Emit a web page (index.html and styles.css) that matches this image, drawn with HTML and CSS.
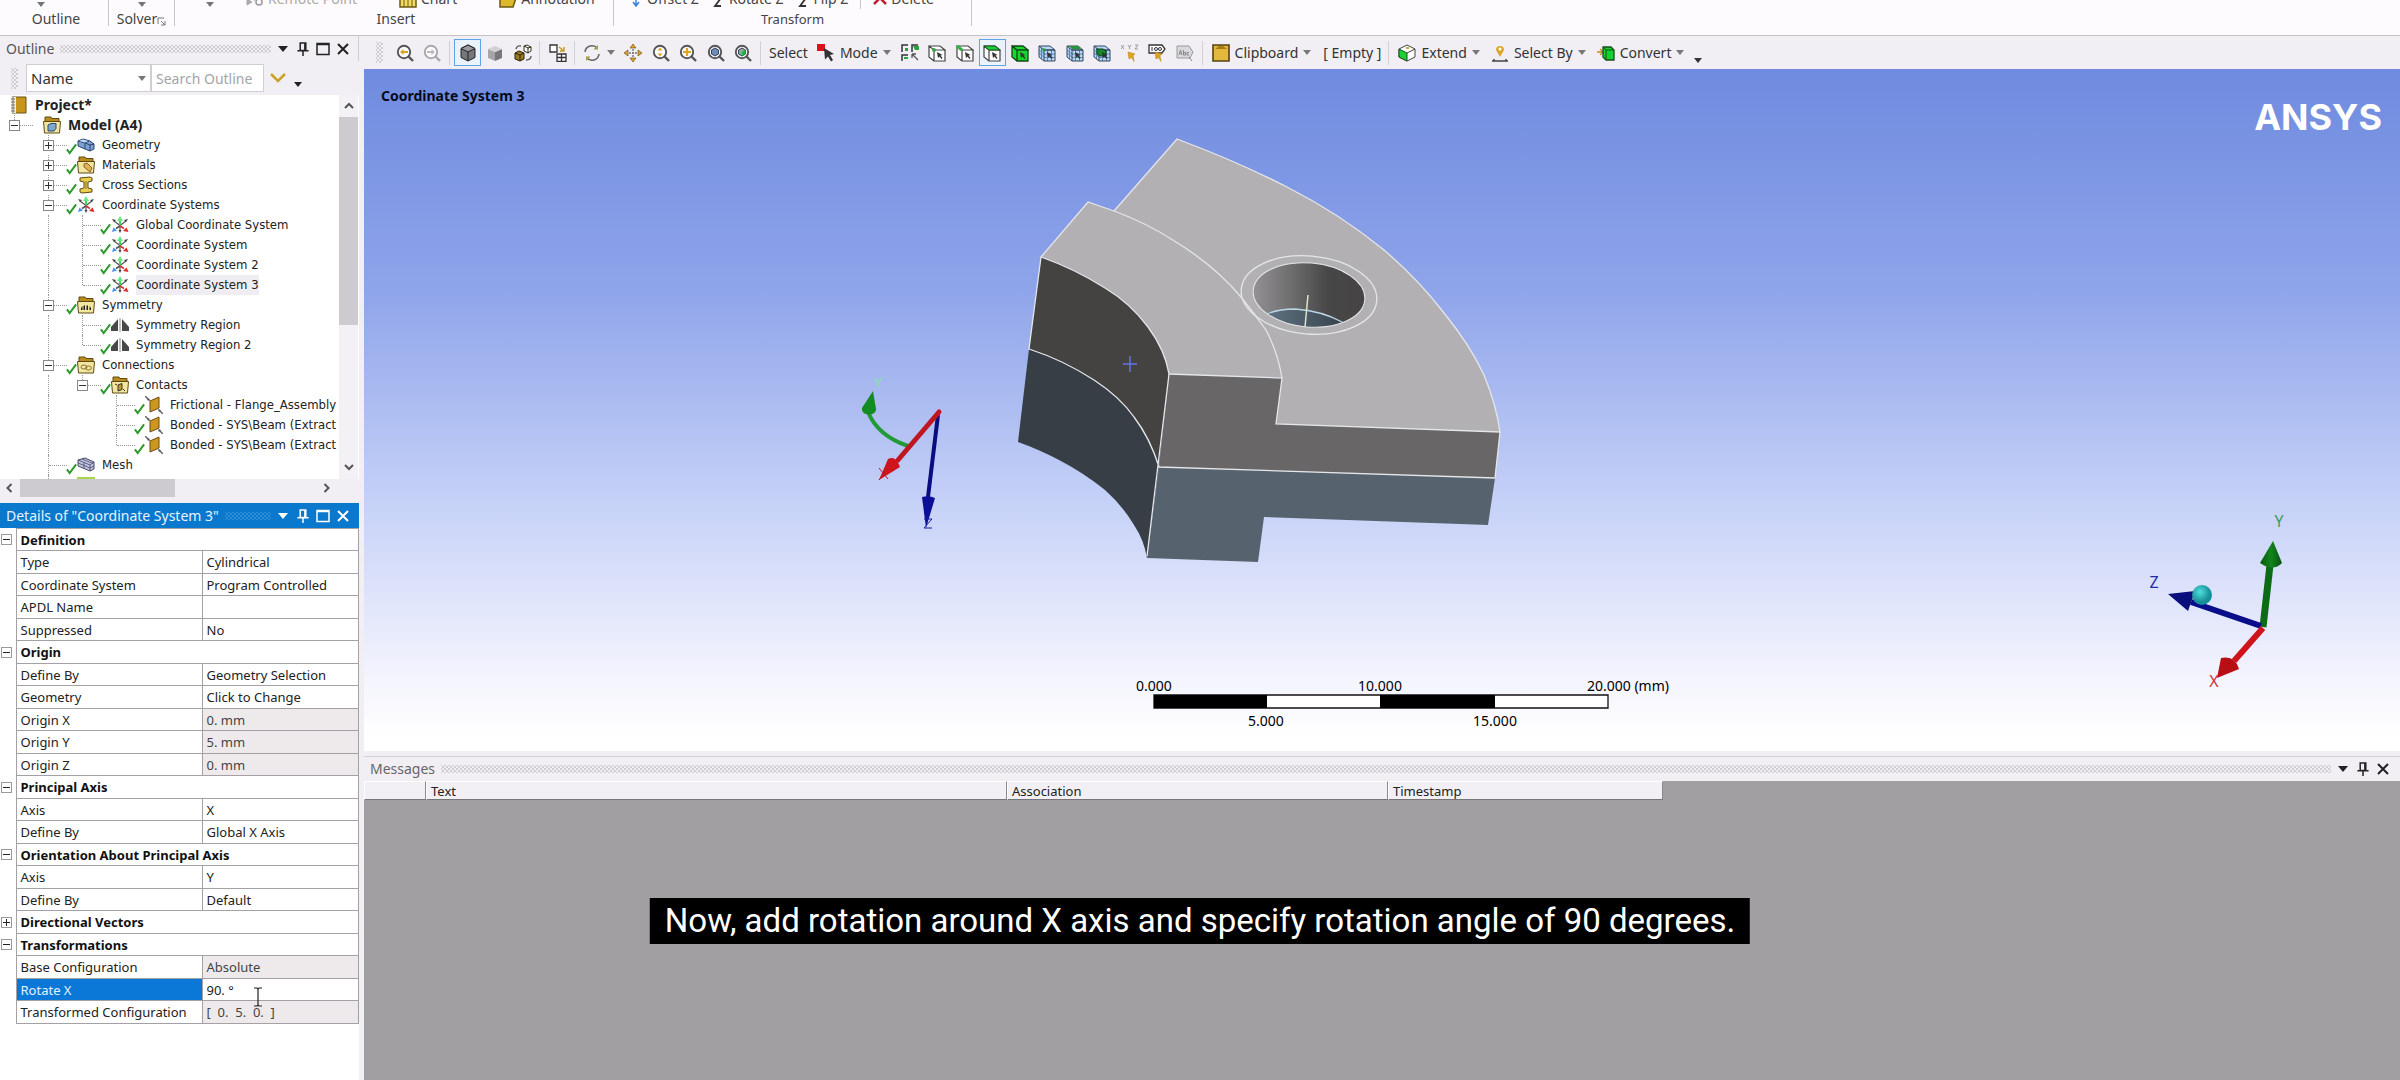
FILE: index.html
```html
<!DOCTYPE html>
<html lang="en">
<head>
<meta charset="utf-8">
<title>Mechanical - Coordinate System 3</title>
<link rel="stylesheet" href="styles.css">
</head>
<body>
<svg class="defs" aria-hidden="true">
  <symbol id="caret" viewBox="0 0 10 6"><path d="M0 0h10L5 6z" fill="currentColor"/></symbol>
  <symbol id="pin" viewBox="0 0 12 15"><path d="M3 1h6v8H3zM0 9.500h12M6 9v6M8 1v8" fill="none" stroke="currentColor" stroke-width="1.600"/></symbol>
  <symbol id="max" viewBox="0 0 14 14"><path d="M1 1.500h12v11H1zM1 2.500h12" fill="none" stroke="currentColor" stroke-width="1.500"/></symbol>
  <symbol id="close" viewBox="0 0 12 12"><path d="M1 1l10 10M11 1L1 11" fill="none" stroke="currentColor" stroke-width="2"/></symbol>
  <symbol id="check" viewBox="0 0 12 12"><path d="M1 6.500l3 4L11 1" fill="none" stroke="#2c9a2c" stroke-width="2.200"/></symbol>
  <symbol id="book" viewBox="0 0 18 18"><path d="M2 1h14v16H2z" fill="#c8951b" stroke="#6b5216"/><path d="M1 1h5v16H1z" fill="#f3edda"/><path d="M3 1v16M1 3h4M1 6h4M1 9h4M1 12h4M1 15h4" stroke="#777" fill="none"/></symbol>
  <symbol id="folder" viewBox="0 0 18 18"><path d="M2 3V1h6l1 1.500h7V6H2z" fill="#b98a1c" stroke="#5e4a14"/><path d="M.5 5.500h17l-1 11.500h-15z" fill="#f3e6a1" stroke="#5e4a14"/></symbol>
  <symbol id="f-model" viewBox="0 0 18 18"><use href="#folder"/><path d="M5 9l3-1.500h5v5L11 15H5z" fill="#7ea6cf" stroke="#274d78"/></symbol>
  <symbol id="f-mat" viewBox="0 0 18 18"><use href="#folder"/><path d="M7 8l3-1 5 5-2 4-6-5z" fill="#e3b155" stroke="#8a681f"/></symbol>
  <symbol id="f-sym" viewBox="0 0 18 18"><use href="#folder"/><path d="M4 14v-2l1.500-2v4zM6.500 14V9.500H8V14zM9.500 14V9.500H11V14zM12.500 14v-4l1.500 2v2z" fill="#222"/></symbol>
  <symbol id="f-conn" viewBox="0 0 18 18"><use href="#folder"/><g fill="none" stroke="#8a7430"><ellipse cx="7" cy="11" rx="3" ry="2"/><ellipse cx="11.500" cy="12" rx="3" ry="2"/></g></symbol>
  <symbol id="f-cont" viewBox="0 0 18 18"><use href="#folder"/><path d="M7 9l4-1.500v6L7 15z" fill="#c89b2a" stroke="#333"/><path d="M4 8l2 1M12 13l2 2" stroke="#333"/></symbol>
  <symbol id="geom" viewBox="0 0 18 18"><path d="M1 5l5-2 7 2 4 3v5l-4 2-5-2-7-3z" fill="#7ea0d3" stroke="#2a4472"/><path d="M1 5l7 2 5 2 4-1M8 7v6M13 9v6M8 7l4-2" fill="none" stroke="#2a4472"/><path d="M2 5l4-1.500L11 5 8 6.500z" fill="#c5d7f0"/></symbol>
  <symbol id="mesh" viewBox="0 0 18 18"><path d="M1 4l7-2 9 4v7l-4 2-12-5z" fill="#c2c4e4" stroke="#444764"/><path d="M1 4l12 5 4-3M13 9v6M7 6.500v6M1 7l12 5 4-2M5 3l11 4.500" fill="none" stroke="#444764" stroke-width=".8"/></symbol>
  <symbol id="beam" viewBox="0 0 18 18"><path d="M3 2l10-1 2 1v3l-4 1v6l4 1v3L5 17l-2-1v-3l4-1V6L3 5z" fill="#e9cf4d" stroke="#5b4a10"/><path d="M9 5v8" stroke="#8c7420"/></symbol>
  <symbol id="csys" viewBox="0 0 18 18"><path d="M9 9.500L3 5M9 9.500L15 5M9 10v5" stroke="#555" stroke-width="1.200"/><path d="M1 3l4 1-2 2zM17 3l-4 1 2 2zM7.500 14h3L9 17z" fill="#444"/><path d="M9 9V5" stroke="#45d25c" stroke-width="2"/><path d="M6 5l3-5 3 5z" fill="#6be883"/><path d="M9 10l-4 2.500" stroke="#555" stroke-width="1.500"/><path d="M1 16l1.500-4.500 3.500 3z" fill="#4a90ec"/><path d="M9 10l4 2.500" stroke="#c33" stroke-width="1.500"/><path d="M17.500 16l-5.500-1 3.500-3.500z" fill="#e02828"/></symbol>
  <symbol id="symm" viewBox="0 0 18 18"><path d="M0 15v-4l7-8v12zM18 15v-4l-7-8v12z" fill="#484848"/><path d="M9 2v14" stroke="#888"/></symbol>
  <symbol id="contact" viewBox="0 0 18 18"><path d="M5 5l9-4v11l-9 4z" fill="#cf961f" stroke="#6b4e10"/><path d="M0 0l4 4M18 18l-4-4" stroke="#666" stroke-width="1.500"/><path d="M5 5L2 4l2-2zM13 13l3 1-2 2z" fill="#555"/></symbol>
  <symbol id="lens" viewBox="0 0 18 18"><circle cx="8" cy="8" r="6.200" fill="#fbfafc" stroke="currentColor" stroke-width="1.900"/><path d="M12.500 12.500L17 17" stroke="currentColor" stroke-width="2.400"/></symbol>
  <symbol id="box" viewBox="0 0 18 18"><path d="M1 2h11l5 4v11H6l-5-4z" fill="#fff"/><path d="M6 6h11v11H6zM1 2h11l5 4H6zM1 2v11l5 4" fill="none" stroke="#444" stroke-width="1.200"/></symbol>
  <symbol id="gridbox" viewBox="0 0 18 18"><path d="M1 2h11l5 4v11H6l-5-4z" fill="#b9d7f5"/><path d="M9.500 6v11M13.500 6v11M6 10h11M6 13.500h11M3.500 4v11M1 6l5 4M1 9l5 4" fill="none" stroke="#5b86b5"/><path d="M6 6h11v11H6zM1 2h11l5 4H6zM1 2v11l5 4" fill="none" stroke="#34475c"/></symbol>
  <symbol id="ptr" viewBox="0 0 18 18"><path d="M9 8l1 6 1.500-1.500L13.500 15l1-1-2-2.500 2-.5z" fill="#333"/></symbol>
  <symbol id="bolt" viewBox="0 0 18 18"><path d="M7 8l7 2-2 1.500 1 6-2.500-4L8 15z" fill="#e0a51f" stroke="#b17f10" stroke-width=".5"/></symbol>
</svg>

<header class="ribbon">
  <section class="group g-outline"><div class="cmds"><svg class="drop"><use href="#caret"/></svg></div><div class="glabel">Outline</div></section>
  <section class="group g-solver"><div class="cmds"><svg class="drop"><use href="#caret"/></svg></div><div class="glabel">Solver<svg class="launch" viewBox="0 0 9 9"><path d="M1 7V1h6M4 4l4 4M8 4v4H4" fill="none" stroke="#777"/></svg></div></section>
  <section class="group g-insert"><div class="cmds">
    <svg class="drop"><use href="#caret"/></svg>
    <button class="cmd off" disabled><svg class="i18" viewBox="0 0 18 18"><path d="M1 9l5 3-5 3zM12 5l-4 6" fill="#aaa" stroke="#aaa"/><circle cx="13" cy="12" r="3" fill="none" stroke="#999" stroke-width="1.500"/></svg>Remote Point</button>
    <button class="cmd"><svg class="i18" viewBox="0 0 18 18"><path d="M1 1h16v16H1z" fill="#f3dc63" stroke="#6b5a12" stroke-width="1.500"/><path d="M5 1v16M9 1v16M13 1v16" stroke="#6b5a12"/></svg>Chart</button>
    <button class="cmd"><svg class="i18" viewBox="0 0 18 18"><path d="M1 1h13l3 7-3 9H1z" fill="#dcb92c" stroke="#6b5a12" stroke-width="1.500"/></svg>Annotation</button>
  </div><div class="glabel">Insert</div></section>
  <section class="group g-transform"><div class="cmds">
    <button class="cmd"><svg class="i14" viewBox="0 0 14 18"><path d="M7 0v15M4 12l3 4 3-4" fill="none" stroke="#3b7ddb" stroke-width="1.500"/></svg>Offset Z</button>
    <button class="cmd"><svg class="i14" viewBox="0 0 14 18"><path d="M4 8h6l-6 8h6" fill="none" stroke="#333" stroke-width="1.800"/></svg>Rotate Z</button>
    <button class="cmd"><svg class="i14" viewBox="0 0 14 18"><path d="M4 8h6l-6 8h6" fill="none" stroke="#333" stroke-width="1.800"/></svg>Flip Z</button>
    <span class="cmdsep"></span>
    <button class="cmd"><svg class="i14" viewBox="0 0 14 18"><path d="M1 2l12 12M13 2L1 14" stroke="#c22035" stroke-width="2.500"/></svg>Delete</button>
  </div><div class="glabel">Transform</div></section>
</header>

<div class="work">
  <aside class="side">
    <section class="outline">
      <div class="bar"><h2>Outline</h2><span class="dots"></span>
        <button aria-label="Menu"><svg class="w10"><use href="#caret"/></svg></button><button aria-label="Pin"><svg class="w12"><use href="#pin"/></svg></button><button aria-label="Maximize"><svg class="w14"><use href="#max"/></svg></button><button aria-label="Close"><svg class="w12"><use href="#close"/></svg></button>
      </div>
      <div class="filter"><span class="grip"></span>
        <div class="pick"><select aria-label="Filter by"><option>Name</option></select><svg class="drop"><use href="#caret"/></svg></div>
        <input aria-label="Search outline" placeholder="Search Outline">
        <button aria-label="Expand search"><svg class="chev" viewBox="0 0 16 10"><path d="M1 1l7 7 7-7" fill="none" stroke="#c9a227" stroke-width="2.500"/></svg></button>
        <button class="more" aria-label="More"><svg class="w8"><use href="#caret"/></svg></button>
      </div>
      <div class="treebox">
        <ul class="tree">
          <li class="root"><svg class="i18"><use href="#book"/></svg><b>Project*</b></li>
          <li><i class="c up h box"></i><i class="s"></i><svg class="i18"><use href="#f-model"/></svg><b>Model (A4)</b></li>
          <li><i class="c"></i><i class="c v h box plus"></i><i class="s"><svg><use href="#check"/></svg></i><svg class="i18"><use href="#geom"/></svg><span>Geometry</span></li>
          <li><i class="c"></i><i class="c v h box plus"></i><i class="s"><svg><use href="#check"/></svg></i><svg class="i18"><use href="#f-mat"/></svg><span>Materials</span></li>
          <li><i class="c"></i><i class="c v h box plus"></i><i class="s"><svg><use href="#check"/></svg></i><svg class="i18"><use href="#beam"/></svg><span>Cross Sections</span></li>
          <li><i class="c"></i><i class="c v h box"></i><i class="s"><svg><use href="#check"/></svg></i><svg class="i18"><use href="#csys"/></svg><span>Coordinate Systems</span></li>
          <li><i class="c"></i><i class="c v"></i><i class="c v h"></i><i class="s"><svg><use href="#check"/></svg></i><svg class="i18"><use href="#csys"/></svg><span>Global Coordinate System</span></li>
          <li><i class="c"></i><i class="c v"></i><i class="c v h"></i><i class="s"><svg><use href="#check"/></svg></i><svg class="i18"><use href="#csys"/></svg><span>Coordinate System</span></li>
          <li><i class="c"></i><i class="c v"></i><i class="c v h"></i><i class="s"><svg><use href="#check"/></svg></i><svg class="i18"><use href="#csys"/></svg><span>Coordinate System 2</span></li>
          <li><i class="c"></i><i class="c v"></i><i class="c up h"></i><i class="s"><svg><use href="#check"/></svg></i><svg class="i18"><use href="#csys"/></svg><span class="sel">Coordinate System 3</span></li>
          <li><i class="c"></i><i class="c v h box"></i><i class="s"><svg><use href="#check"/></svg></i><svg class="i18"><use href="#f-sym"/></svg><span>Symmetry</span></li>
          <li><i class="c"></i><i class="c v"></i><i class="c v h"></i><i class="s"><svg><use href="#check"/></svg></i><svg class="i18"><use href="#symm"/></svg><span>Symmetry Region</span></li>
          <li><i class="c"></i><i class="c v"></i><i class="c up h"></i><i class="s"><svg><use href="#check"/></svg></i><svg class="i18"><use href="#symm"/></svg><span>Symmetry Region 2</span></li>
          <li><i class="c"></i><i class="c v h box"></i><i class="s"><svg><use href="#check"/></svg></i><svg class="i18"><use href="#f-conn"/></svg><span>Connections</span></li>
          <li><i class="c"></i><i class="c v"></i><i class="c up h box"></i><i class="s"><svg><use href="#check"/></svg></i><svg class="i18"><use href="#f-cont"/></svg><span>Contacts</span></li>
          <li><i class="c"></i><i class="c v"></i><i class="c"></i><i class="c v h"></i><i class="s"><svg><use href="#check"/></svg></i><svg class="i18"><use href="#contact"/></svg><span>Frictional - Flange_Assembly</span></li>
          <li><i class="c"></i><i class="c v"></i><i class="c"></i><i class="c v h"></i><i class="s"><svg><use href="#check"/></svg></i><svg class="i18"><use href="#contact"/></svg><span>Bonded - SYS\Beam (Extract</span></li>
          <li><i class="c"></i><i class="c v"></i><i class="c"></i><i class="c up h"></i><i class="s"><svg><use href="#check"/></svg></i><svg class="i18"><use href="#contact"/></svg><span>Bonded - SYS\Beam (Extract</span></li>
          <li><i class="c"></i><i class="c v h"></i><i class="s"><svg><use href="#check"/></svg></i><svg class="i18"><use href="#mesh"/></svg><span>Mesh</span></li>
          <li><i class="c"></i><i class="c v"></i><i class="s"></i><svg class="i18" viewBox="0 0 18 18"><path d="M0 1h18v16H0z" fill="#a5d64c"/></svg></li>
        </ul>
        <div class="vscroll"><svg viewBox="0 0 10 7"><path d="M1 6l4-4 4 4" fill="none" stroke="#555" stroke-width="2"/></svg><span></span><svg viewBox="0 0 10 7"><path d="M1 1l4 4 4-4" fill="none" stroke="#555" stroke-width="2"/></svg></div>
      </div>
      <div class="hscroll"><svg viewBox="0 0 7 10"><path d="M6 1L2 5l4 4" fill="none" stroke="#555" stroke-width="2"/></svg><span></span><svg viewBox="0 0 7 10"><path d="M1 1l4 4-4 4" fill="none" stroke="#555" stroke-width="2"/></svg></div>
    </section>

    <section class="details">
      <div class="bar active"><h2>Details of "Coordinate System 3"</h2><span class="dots"></span>
        <button aria-label="Menu"><svg class="w10"><use href="#caret"/></svg></button><button aria-label="Pin"><svg class="w12"><use href="#pin"/></svg></button><button aria-label="Maximize"><svg class="w14"><use href="#max"/></svg></button><button aria-label="Close"><svg class="w12"><use href="#close"/></svg></button>
      </div>
      <table class="props">
        <colgroup><col class="k0"><col class="k1"><col></colgroup>
        <tbody>
        <tr><td><i class="ex"></i></td><th colspan="2">Definition</th></tr>
        <tr><td></td><td>Type</td><td>Cylindrical</td></tr>
        <tr><td></td><td>Coordinate System</td><td>Program Controlled</td></tr>
        <tr><td></td><td>APDL Name</td><td></td></tr>
        <tr><td></td><td>Suppressed</td><td>No</td></tr>
        <tr><td><i class="ex"></i></td><th colspan="2">Origin</th></tr>
        <tr><td></td><td>Define By</td><td>Geometry Selection</td></tr>
        <tr><td></td><td>Geometry</td><td>Click to Change</td></tr>
        <tr><td></td><td>Origin X</td><td class="ro">0. mm</td></tr>
        <tr><td></td><td>Origin Y</td><td class="ro">5. mm</td></tr>
        <tr><td></td><td>Origin Z</td><td class="ro">0. mm</td></tr>
        <tr><td><i class="ex"></i></td><th colspan="2">Principal Axis</th></tr>
        <tr><td></td><td>Axis</td><td>X</td></tr>
        <tr><td></td><td>Define By</td><td>Global X Axis</td></tr>
        <tr><td><i class="ex"></i></td><th colspan="2">Orientation About Principal Axis</th></tr>
        <tr><td></td><td>Axis</td><td>Y</td></tr>
        <tr><td></td><td>Define By</td><td>Default</td></tr>
        <tr><td><i class="ex plus"></i></td><th colspan="2">Directional Vectors</th></tr>
        <tr><td><i class="ex"></i></td><th colspan="2">Transformations</th></tr>
        <tr><td></td><td>Base Configuration</td><td class="ro">Absolute</td></tr>
        <tr><td></td><td class="cur"><label for="rx">Rotate X</label></td><td class="edit"><input id="rx" value="90. °"><svg class="ibeam" viewBox="0 0 10 20"><path d="M1 1h3l1 1 1-1h3M5 2v16M1 19h3l1-1 1 1h3" fill="none" stroke="#222" stroke-width="1.200"/></svg></td></tr>
        <tr><td></td><td>Transformed Configuration</td><td class="ro wide">[  0.  5.  0.  ]</td></tr>
        </tbody>
      </table>
    </section>
  </aside>

  <main class="main">
    <nav class="toolbar">
      <span class="grip"></span>
      <div class="tools t1">
        <button class="tool" aria-label="Previous view"><svg class="i18" viewBox="0 0 18 18"><use href="#lens"/><path d="M4 8l3.500-3v2H12v2H7.500v2z" fill="#e0a020"/></svg></button>
        <button class="tool dim" aria-label="Next view"><svg class="i18" viewBox="0 0 18 18"><use href="#lens"/><path d="M12 8L8.500 5v2H4v2h4.500v2z" fill="#bbb"/></svg></button>
      </div>
      <span class="sep"></span>
      <div class="tools">
        <button class="tool on" aria-label="Shaded exterior and edges"><svg class="i18" viewBox="0 0 18 18"><path d="M9 1l7 3.500v9L9 17l-7-3.500v-9z" fill="#77777b" stroke="#222"/><path d="M2 4.500L9 8l7-3.500L9 1z" fill="#9a9a9e" stroke="#222"/><path d="M9 8v9" stroke="#222"/></svg></button>
        <button class="tool" aria-label="Shaded exterior"><svg class="i18" viewBox="0 0 18 18"><path d="M2 5l7 3v9l-7-3z" fill="#a5a5a8"/><path d="M9 8l7-3v9l-7 3z" fill="#77777a"/><path d="M2 5l7-3 7 3-7 3z" fill="#d2d2d5"/></svg></button>
        <button class="tool" aria-label="Thick shells"><svg class="i18" viewBox="0 0 18 18"><path d="M10 2l3-1 4 2v4l-3 2-4-2z" fill="#fff" stroke="#333"/><path d="M1 9l4-2 5 2v6l-4 2-5-2z" fill="#9a7a20" stroke="#2d2508"/><path d="M1 9l5 2 4-2M6 11v6M10 2l4 2 3-1M14 4v5" stroke="#2d2508" fill="none"/><path d="M2 5q1-4 5-3M17 12q0 4-5 4" fill="none" stroke="#555" stroke-width="1.300"/></svg></button>
      </div>
      <span class="sep"></span>
      <div class="tools"><button class="tool" aria-label="Viewports"><svg class="i18" viewBox="0 0 18 18"><path d="M1 1h7v7H1zM8 10h9v7.500H8zM12.500 10v7.500M8 13.500h9" fill="#fff" stroke="#333" stroke-width="1.300"/><path d="M10 3l5 4M15 3v4h-4" stroke="#c79a20" fill="none" stroke-width="1.400"/></svg></button></div>
      <span class="sep"></span>
      <div class="tools t2">
        <button class="tool spin" aria-label="Rotate"><svg class="i18" viewBox="0 0 18 18"><path d="M2 8a7 7 0 0 1 12.500-3.500M16 10A7 7 0 0 1 3.500 13.500" fill="none" stroke="#666" stroke-width="1.600"/><path d="M15 1v4.500h-4.500zM3 17v-4.500h4.500z" fill="#a39a4a"/></svg><svg class="w8"><use href="#caret"/></svg></button>
        <button class="tool" aria-label="Pan"><svg class="i18" viewBox="0 0 18 18"><path d="M9 0l3 4H6zM9 18l3-4H6zM0 9l4-3v6zM18 9l-4-3v6z" fill="#dda526" stroke="#5a4613" stroke-width=".6"/><path d="M9 5v8M5 9h8" stroke="#777" stroke-width="1.400" stroke-dasharray="2 1"/></svg></button>
        <button class="tool" aria-label="Zoom"><svg class="i18" viewBox="0 0 18 18"><use href="#lens"/><path d="M8 3.500l2.500 3h-5zM8 12.500l2.500-3h-5z" fill="#dda526"/></svg></button>
        <button class="tool" aria-label="Box zoom"><svg class="i18" viewBox="0 0 18 18"><use href="#lens"/><path d="M8 4v8M4 8h8" stroke="#dda526" stroke-width="2.200"/></svg></button>
        <button class="tool" aria-label="Zoom to fit"><svg class="i18" viewBox="0 0 18 18"><use href="#lens"/><path d="M8 4l3.500 2v4L8 12l-3.500-2V6z" fill="#6d8bb8" stroke="#345"/></svg></button>
        <button class="tool" aria-label="Zoom to selection"><svg class="i18" viewBox="0 0 18 18"><use href="#lens"/><path d="M8 4l3.500 2v4L8 12l-3.500-2V6z" fill="#8fa5a0" stroke="#345"/><path d="M8 8l3.500-2v4L8 12z" fill="#22b53a"/></svg></button>
      </div>
      <span class="sep"></span>
      <span class="say">Select</span>
      <button class="text mode"><svg class="i18" viewBox="0 0 18 18"><path d="M0 0h8v7H0z" fill="#e0101a"/><path d="M7 4l10 6-4 1 3 5-2 1.500-3-5-3 3z" fill="#333"/></svg>Mode<svg class="w8"><use href="#caret"/></svg></button>
      <div class="tools t3">
        <button class="tool" aria-label="Smart select"><svg class="i18" viewBox="0 0 18 18"><path d="M1 8V1h6M11 8V1h6M1 17v-6h6" fill="none" stroke="#333" stroke-width="1.500"/><path d="M12 2h6v4h-4zM4 4h3v3H4zM3 13h4v2H3z" fill="#27a53c"/><path d="M11 10l6 6M11 10v4M11 10h4" stroke="#555" stroke-width="1.300"/></svg></button>
        <button class="tool" aria-label="Vertex"><svg class="i18" viewBox="0 0 18 18"><use href="#box"/><circle cx="6" cy="6" r="2" fill="#3ca64a"/><use href="#ptr"/></svg></button>
        <button class="tool" aria-label="Edge"><svg class="i18" viewBox="0 0 18 18"><use href="#box"/><path d="M1 2l5 4" stroke="#2fb443" stroke-width="3"/><use href="#ptr"/></svg></button>
        <button class="tool on" aria-label="Face"><svg class="i18" viewBox="0 0 18 18"><use href="#box"/><path d="M1 2h11l5 4H6z" fill="#17d136" stroke="#184d1e"/><use href="#ptr"/></svg></button>
        <button class="tool" aria-label="Body"><svg class="i18" viewBox="0 0 18 18"><path d="M1 2h11l5 4v11H6l-5-4z" fill="#12d92c"/><path d="M6 6h11v11H6zM1 2h11l5 4H6zM1 2v11l5 4" fill="none" stroke="#14451a" stroke-width="1.300"/><use href="#ptr"/></svg></button>
        <button class="tool" aria-label="Node"><svg class="i18" viewBox="0 0 18 18"><use href="#gridbox"/><circle cx="6" cy="6" r="1.800" fill="#2a9b3b"/><use href="#ptr"/></svg></button>
        <button class="tool" aria-label="Element face"><svg class="i18" viewBox="0 0 18 18"><use href="#gridbox"/><path d="M3 2h9l3 3H6z" fill="#23963a"/><use href="#ptr"/></svg></button>
        <button class="tool" aria-label="Element"><svg class="i18" viewBox="0 0 18 18"><use href="#gridbox"/><path d="M4 5h6l3 2v5H7l-3-2z" fill="#158a2a" stroke="#0d3d16"/><use href="#ptr"/></svg></button>
        <button class="tool" aria-label="Hit point coordinates"><svg class="i18" viewBox="0 0 18 18"><path d="M0 1l3 4M3 1L0 5M7 1l1.500 2L10 1M8.500 3v2M14 1h3l-3 4h3" fill="none" stroke="#999"/><use href="#bolt"/></svg></button>
        <button class="tool" aria-label="Label"><svg class="i18" viewBox="0 0 18 18"><path d="M1 1h13l3 4-3 4H1z" fill="#fff" stroke="#333" stroke-width="1.300"/><path d="M4 3v4" stroke="#333"/><circle cx="8" cy="5" r="1.500" fill="none" stroke="#333"/><circle cx="12" cy="5" r="1.500" fill="none" stroke="#333"/><use href="#bolt"/></svg></button>
        <button class="tool" aria-label="Annotation label"><svg class="i18" viewBox="0 0 18 18"><path d="M1 2h12l4 6-3 6H1z" fill="#d9d8dc" stroke="#999"/><path d="M3 11l1.500-5L6 11M3 9h3M7.500 6v5h2V8.500h-2M13 8.500h-2V11h2M13 13l3 4" fill="none" stroke="#888"/></svg></button>
      </div>
      <span class="sep"></span>
      <button class="text"><svg class="i18" viewBox="0 0 18 18"><path d="M1 1h16v16H1z" fill="#e3b83c" stroke="#57430f" stroke-width="1.600"/><path d="M3 5l4-3h4l4 3z" fill="#a67c15"/></svg>Clipboard<svg class="w8"><use href="#caret"/></svg></button>
      <span class="say empty">[ Empty ]</span>
      <span class="sep"></span>
      <button class="text"><svg class="i18" viewBox="0 0 18 18"><path d="M9 1l8 4v8l-8 4-8-4V5z" fill="#fff" stroke="#444"/><path d="M1 5l8 4v8l-8-4z" fill="#1fd035" stroke="#1b4d20"/><path d="M9 9l8-4" stroke="#444"/><path d="M8 3h3v2H8z" fill="#d9a52a"/></svg>Extend<svg class="w8"><use href="#caret"/></svg></button>
      <button class="text"><svg class="i18" viewBox="0 0 18 18"><path d="M9 13L5 6a4 4 0 1 1 8 0z" fill="#dba728"/><circle cx="9" cy="5" r="1.500" fill="#fff"/><path d="M1 17h16M3 17v-2M15 17v-2" stroke="#444" stroke-width="1.500"/></svg>Select By<svg class="w8"><use href="#caret"/></svg></button>
      <button class="text"><svg class="i18" viewBox="0 0 18 18"><path d="M0 8h5M3 5l3 3-3 3" stroke="#c58b20" fill="none" stroke-width="1.300"/><path d="M6 3h8l3 3v10H9l-3-3z" fill="#13d32d" stroke="#184d1e" stroke-width="1.300"/><path d="M9 6v10M9 6h8M6 3l3 3" stroke="#184d1e"/></svg>Convert<svg class="w8"><use href="#caret"/></svg></button>
      <button class="more" aria-label="More"><svg class="w8"><use href="#caret"/></svg></button>
    </nav>

    <section class="view">
      <svg class="scene" viewBox="364 69 2036 682">
        <defs>
          <linearGradient id="bore"><stop offset="0" stop-color="#969496"/><stop offset=".35" stop-color="#6e6d6e"/><stop offset=".65" stop-color="#484747"/><stop offset="1" stop-color="#454443"/></linearGradient>
          <linearGradient id="bore2"><stop offset="0" stop-color="#627684"/><stop offset="1" stop-color="#35424c"/></linearGradient>
          <radialGradient id="ball" cx=".4" cy=".35"><stop offset="0" stop-color="#4fe0dc"/><stop offset="1" stop-color="#178f98"/></radialGradient>
          <linearGradient id="gc"><stop offset="0" stop-color="#085a10"/><stop offset=".5" stop-color="#12851b"/><stop offset="1" stop-color="#075010"/></linearGradient>
          <clipPath id="hole"><ellipse cx="1309" cy="295" rx="56" ry="32" transform="rotate(5 1309 295)"/></clipPath>
        </defs>
        <path d="M1177 139L1114 211 1088 202 1041 257 1169 374 1282 378 1276 424 1500 432Q1496 404 1484 375 1470 345 1444 313 1418 279 1384 250 1340 214 1287 187 1236 161 1177 139z" fill="#b2b0b3"/>
        <path d="M1041 257L1029 349Q1063 360 1094 380 1120 397 1134 417 1150 438 1159 467L1169 374Q1165 350 1148 327 1130 303 1105 288 1075 269 1041 257z" fill="#444342"/>
        <path d="M1029 349L1018 442Q1038 449 1059 460 1084 473 1105 490 1122 505 1134 525 1144 540 1147 558L1159 467Q1150 438 1134 417 1120 397 1094 380 1063 360 1029 349z" fill="#373e46"/>
        <path d="M1169 374l113 4-6 46 224 8-5 46-336-11z" fill="#696668"/>
        <path d="M1159 467l336 11-7 47-224-8-6 45-111-4z" fill="#56626d"/>
        <g clip-path="url(#hole)">
          <path d="M1250 260h120v70h-120z" fill="url(#bore)"/>
          <path d="M1262 315Q1278 309 1295 309 1322 311 1345 324L1340 335H1262z" fill="url(#bore2)"/>
        </g>
        <g fill="none" stroke="#e4e6ea" stroke-width="1.300">
          <path d="M1114 211L1177 139Q1236 161 1287 187 1340 214 1384 250 1418 279 1444 313 1470 345 1484 375 1496 404 1500 432L1276 424 1282 378 1169 374Q1165 350 1148 327 1130 303 1105 288 1075 269 1041 257L1088 202 1114 211Q1147 223 1176 242 1215 266 1241 297 1254 313 1266 330 1278 353 1282 378"/>
          <path d="M1041 257L1029 349Q1063 360 1094 380 1120 397 1134 417 1150 438 1159 467L1495 478M1169 374L1147 556M1500 432l-5 46"/>
          <ellipse cx="1309" cy="295" rx="68" ry="39" transform="rotate(5 1309 295)"/>
          <ellipse cx="1309" cy="295" rx="56" ry="32" transform="rotate(5 1309 295)" stroke-width="1"/>
          <path d="M1267 314Q1278 309 1295 309 1322 311 1342 322" stroke="#bcd6e6"/>
          <path d="M1308 295l-3 32" stroke="#dfe6c8" stroke-width="1.500"/>
        </g>
        <path d="M1123 364h14M1130 356v16" stroke="#6276e0" stroke-width="1.500"/>
        <!-- local coordinate system triad -->
        <path d="M908 446Q878 436 868 412" fill="none" stroke="#229a35" stroke-width="4"/>
        <path d="M862 408l11-17 3 18a7 5 0 0 1-14 1z" fill="#138a22"/>
        <path d="M938 415l-10 82" stroke="#0a0d80" stroke-width="4"/>
        <path d="M922 497q7-2 13 1l-9 30z" fill="#0b0e96"/>
        <path d="M939 412l-41 48" stroke="#c01622" stroke-width="5" stroke-linecap="round"/>
        <path d="M879 480l9-21q8-4 12 8z" fill="#d0141c"/>
        <path d="M879 468l9 11M887 468l-8 12" stroke="#c01622"/>
        <path d="M924 519h8l-8 9h8" fill="none" stroke="#1b1fa0"/>
        <path d="M875 378l3 4 4-4M878 382v5" fill="none" stroke="#8fdcb0" stroke-width="1.500"/>
        <!-- global triad -->
        <path d="M2263 627l7-62" stroke="#0d6b16" stroke-width="7"/>
        <path d="M2260 563l13-22 9 22q-9 9-22 0z" fill="url(#gc)"/>
        <path d="M2261 626l-70-24" stroke="#0a0d8a" stroke-width="6"/>
        <path d="M2168 594l27-3-7 20z" fill="#0a0d7c"/>
        <circle cx="2202" cy="595" r="10" fill="url(#ball)"/>
        <path d="M2263 628l-29 33" stroke="#d0141c" stroke-width="6"/>
        <path d="M2217 678l4-20q14-3 18 11z" fill="#b80f14"/>
        <g class="axis"><text x="2279" y="527" fill="#3f9b5c">Y</text><text x="2154" y="588" fill="#2529a8">Z</text><text x="2214" y="687" fill="#cf3040">X</text></g>
        <!-- scale ruler -->
        <path d="M1154 695h454v13h-454z" fill="#fff" stroke="#111" stroke-width="1.300"/>
        <path d="M1154 695h113v13h-113zM1380 695h115v13h-115z"/>
        <g class="ruler"><text x="1154" y="691">0.000</text><text x="1266" y="726">5.000</text><text x="1380" y="691">10.000</text><text x="1495" y="726">15.000</text><text x="1628" y="691">20.000 (mm)</text></g>
      </svg>
      <h1 class="title">Coordinate System 3</h1>
      <div class="brand">ANSYS</div>
    </section>

    <section class="messages">
      <div class="bar"><h2>Messages</h2><span class="dots"></span>
        <button aria-label="Menu"><svg class="w10"><use href="#caret"/></svg></button><button aria-label="Pin"><svg class="w12"><use href="#pin"/></svg></button><button aria-label="Close"><svg class="w12"><use href="#close"/></svg></button>
      </div>
      <table class="msgs"><thead><tr><th class="m0"></th><th class="m1">Text</th><th class="m2">Association</th><th class="m3">Timestamp</th></tr></thead></table>
    </section>
  </main>
</div>
<p class="caption">Now, add rotation around X axis and specify rotation angle of 90 degrees.</p>
</body>
</html>
```
FILE: styles.css
```css
* { box-sizing: border-box; }
body {
  margin: 0;
  height: 100vh;
  display: flex;
  flex-direction: column;
  overflow: hidden;
  background: #f1eff4;
  color: #222;
  font: 14px/20px "Noto Sans", sans-serif;
}
button { border: 0; padding: 0; background: none; color: inherit; font: inherit; display: flex; align-items: center; justify-content: center; }
svg { display: block; flex: none; }
h1, h2, p, ul { margin: 0; padding: 0; }
.defs { position: absolute; width: 0; height: 0; }
.i18 { width: 18px; height: 18px; }
.i14 { width: 14px; height: 18px; }
.w8 { width: 8px; height: 5px; }
.w10 { width: 10px; height: 6px; }
.w12 { width: 12px; height: 14px; }
.w14 { width: 14px; height: 14px; }
.drop { width: 8px; height: 5px; color: #777; }

/* ribbon */
.ribbon { height: 36px; flex: none; display: flex; overflow: hidden; background: #fdfbfe; border-bottom: 1px solid #c4c2c7; }
.group { height: 26px; display: flex; flex-direction: column; justify-content: flex-end; border-right: 1px solid #c8c6cb; }
.cmds { display: flex; align-items: flex-end; height: 18px; flex: none; }
.cmds .drop { margin-bottom: 2px; }
.cmd { height: 20px; gap: 4px; color: #444; white-space: nowrap; }
.cmd.off { color: #aaa; }
.glabel { height: 20px; flex: none; display: flex; justify-content: center; align-items: center; color: #444; margin-bottom: -3px; }
.g-outline { width: 109px; }
.g-outline .cmds { padding-left: 37px; }
.g-outline .glabel { padding-left: 4px; }
.g-solver { width: 66px; }
.g-solver .cmds { justify-content: center; }
.launch { width: 9px; height: 9px; margin-top: 4px; }
.g-insert { width: 439px; }
.g-insert .cmds { padding-left: 31px; gap: 42px; }
.g-insert .cmds .drop { margin-right: -10px; }
.g-insert .glabel { padding-left: 4px; }
.g-transform { width: 358px; font-size: 13px; }
.g-transform .cmds { padding-left: 15px; gap: 12px; }
.g-transform .cmd { font-size: 14px; }
.cmdsep { width: 1px; height: 20px; background: #c8c6cb; }

.work { flex: 1; min-height: 0; display: flex; gap: 5px; }
.side { width: 359px; flex: none; display: flex; flex-direction: column; gap: 6px; }
.main { flex: 1; min-width: 0; display: flex; flex-direction: column; }

/* panel title bars */
.bar { height: 25px; flex: none; display: flex; align-items: center; padding: 0 6px; color: #222; }
.bar h2 { font-size: 14px; font-weight: 400; color: #555; white-space: nowrap; margin-right: 6px; }
.bar button { width: 20px; height: 20px; flex: none; }
.dots { flex: 1; height: 8px; margin-right: 2px; background: radial-gradient(circle, #cfccd2 1px, transparent 1px) 0 0 / 4px 4px, radial-gradient(circle, #cfccd2 1px, transparent 1px) 2px 2px / 4px 4px; }
.bar.active { background: #0a78cc; color: #fff; }
.bar.active h2 { color: #e8f4ff; }
.bar.active .dots { background-image: radial-gradient(circle, #2d8dd6 1px, transparent 1px), radial-gradient(circle, #2d8dd6 1px, transparent 1px); }
.grip { width: 7px; height: 21px; flex: none; background: radial-gradient(circle, #cfccd2 1px, transparent 1px) 0 0 / 4px 4px, radial-gradient(circle, #cfccd2 1px, transparent 1px) 2px 2px / 4px 4px; }

/* outline panel */
.outline { flex: none; }
.outline .bar { border-right: 1px solid #cfcdd2; padding-right: 5px; }
.filter { height: 34px; display: flex; align-items: center; padding-left: 11px; }
.pick { position: relative; margin-left: 8px; width: 125px; }
.pick .drop { position: absolute; right: 5px; top: 12px; pointer-events: none; }
.pick select, .filter input { width: 100%; height: 28px; border: 1px solid #d0ced3; border-radius: 0; background: #fff; color: #333; font: 15px/20px "Noto Sans", sans-serif; padding: 0 4px; appearance: none; }
.filter input { width: 113px; font-size: 14px; }
.filter input::placeholder { color: #a5a3a8; }
.filter button { margin-left: 6px; }
.chev { width: 16px; height: 10px; }
.filter .more { margin: 12px 0 0 8px; }
.treebox { height: 384px; display: flex; background: #fff; }
.tree { flex: 1; min-width: 0; overflow: hidden; list-style: none; font-family: "DejaVu Sans Condensed", "DejaVu Sans", sans-serif; font-size: 13px; }
.tree li { display: flex; align-items: center; height: 20px; white-space: nowrap; }
.tree .i18 { margin-right: 7px; }
.tree b { font-family: "Noto Sans", sans-serif; font-size: 14px; }
.tree .root { padding-left: 10px; }
.sel { background: #efedf1; }
.c { position: relative; width: 34px; height: 20px; flex: none; }
.c::before { content: ""; position: absolute; left: 14px; top: 0; bottom: 0; }
.c.v::before { border-left: 1px dotted #999; }
.c.up::before { border-left: 1px dotted #999; bottom: 10px; }
.c.h::after { content: ""; position: absolute; left: 15px; right: 1px; top: 10px; border-top: 1px dotted #999; }
.c.box { background: linear-gradient(#333, #333) 11px 10px / 7px 1px no-repeat, linear-gradient(#fff, #fff) 10px 6px / 9px 9px no-repeat, linear-gradient(#888, #888) 9px 5px / 11px 11px no-repeat; }
.c.box.plus { background: linear-gradient(#333, #333) 11px 10px / 7px 1px no-repeat, linear-gradient(#333, #333) 14px 7px / 1px 7px no-repeat, linear-gradient(#fff, #fff) 10px 6px / 9px 9px no-repeat, linear-gradient(#888, #888) 9px 5px / 11px 11px no-repeat; }
.c.box::after { left: 20px; }
.c.box.v::before, .c.box.up::before { bottom: 15px; }
.s { width: 9px; height: 20px; flex: none; display: flex; justify-content: flex-end; }
.s svg { width: 11px; height: 12px; margin-top: 8px; }
.vscroll { width: 19px; margin-right: 1px; background: #f3f1f5; display: flex; flex-direction: column; align-items: center; }
.vscroll svg { width: 10px; height: 7px; margin: 7px 0 8px; }
.vscroll span { width: 100%; height: 208px; background: #cdcbcf; margin-bottom: auto; }
.hscroll { height: 18px; display: flex; align-items: center; padding: 0 28px 0 5px; }
.hscroll svg { width: 8px; height: 10px; }
.hscroll span { width: 155px; height: 18px; margin: 0 auto 0 7px; background: #cdcbcf; }

/* details panel */
.details { flex: 1; background: #fff; }
.props { width: 100%; table-layout: fixed; border-collapse: collapse; font-size: 13px; }
.k0 { width: 16px; }
.k1 { width: 186px; }
.props tr { height: 22px; }
.props tr:nth-child(even) { height: 23px; }
.props td, .props th { padding: 0 0 0 4px; border: 1px solid #a3a1a5; line-height: 20px; text-align: left; white-space: nowrap; overflow: hidden; }
.props td:first-child { padding: 0 0 0 1px; border-top: 0; border-bottom: 0; border-left: 0; }
.props th { font-weight: 700; color: #111; }
.props .ro { background: #eeeaeb; color: #444; }
.props .cur { background: #0b78d8; color: #e4f2ff; }
.props .wide { white-space: pre; }
.props .edit { position: relative; overflow: visible; }
.edit input { display: block; width: 100%; height: 20px; border: 0; padding: 0; background: none; font: inherit; color: inherit; outline: 0; }
.ibeam { position: absolute; left: 50px; top: 8px; width: 10px; height: 20px; }
.ex { display: block; width: 11px; height: 11px; border: 1px solid #999; background: linear-gradient(#222, #222) center / 7px 1px no-repeat; }
.ex.plus { background: linear-gradient(#222, #222) center / 7px 1px no-repeat, linear-gradient(#222, #222) center / 1px 7px no-repeat; }

/* graphics toolbar */
.toolbar { height: 33px; flex: none; display: flex; align-items: center; padding-left: 12px; color: #333; white-space: nowrap; }
.toolbar .grip { margin-right: 8px; }
.tools { display: flex; }
.tool { width: 27px; height: 27px; border: 1px solid transparent; color: #555; }
.tool:nth-child(even) { margin-right: 1px; }
.tool.on { border-color: #5fa4e6; background: #eaf2fb; }
.tool.dim { color: #a9a7ac; }
.tool.spin { width: 40px; gap: 6px; color: #777; }
.sep { width: 1px; height: 24px; background: #d2d0d5; margin: 0 4px 0 3px; }
.say { margin-left: 4px; }
.text { gap: 5px; margin: 0 6px 0 5px; }
.text .w8 { color: #777; }
.text.mode { margin-left: 9px; }
.say.empty { margin: 0 4px 0 6px; }
.toolbar .more { margin: 16px 0 0 4px; }

/* graphics window */
.view { position: relative; flex: 1; min-height: 0; background: linear-gradient(#6f8bdf, #8ea4ea 32%, #c8d3f8 65%, #f0f1fd 87%, #fff 98%); }
.scene { width: 100%; height: 100%; }
.axis text { font: 16px "Noto Sans", sans-serif; text-anchor: middle; }
.ruler text { font: 14px "Noto Sans", sans-serif; text-anchor: middle; }
.title { position: absolute; left: 17px; top: 17px; font-size: 14px; line-height: 20px; font-weight: 700; color: #060b1c; }
.brand { position: absolute; right: 18px; top: 25px; font: 700 36px/46px Inter, sans-serif; color: #fff; }

/* messages */
.messages { height: 329px; flex: none; display: flex; flex-direction: column; align-items: flex-start; background: #a19fa2; border-top: 5px solid #f1eff4; }
.messages .bar { width: 100%; background: #f1eff4; border-top: 1px solid #d2d0d5; padding-right: 7px; }
.messages .bar h2 { color: #666; }
.msgs { border-collapse: separate; border-spacing: 0; height: 19px; table-layout: fixed; width: 1299px; font-size: 13px; }
.msgs th { height: 19px; padding: 0 0 0 4px; background: #f2f0f4; border: 1px solid #fff; border-right-color: #8b898d; border-bottom-color: #77757a; font-weight: 400; text-align: left; line-height: 16px; }
.m0 { width: 62px; }
.m1 { width: 581px; }
.m2 { width: 381px; }

/* subtitle overlay */
.caption { position: absolute; left: 50%; bottom: 136px; transform: translateX(-50%); padding: 0 15px; background: #000; color: #fff; font: 33px/46px Roboto, sans-serif; white-space: nowrap; }
```
